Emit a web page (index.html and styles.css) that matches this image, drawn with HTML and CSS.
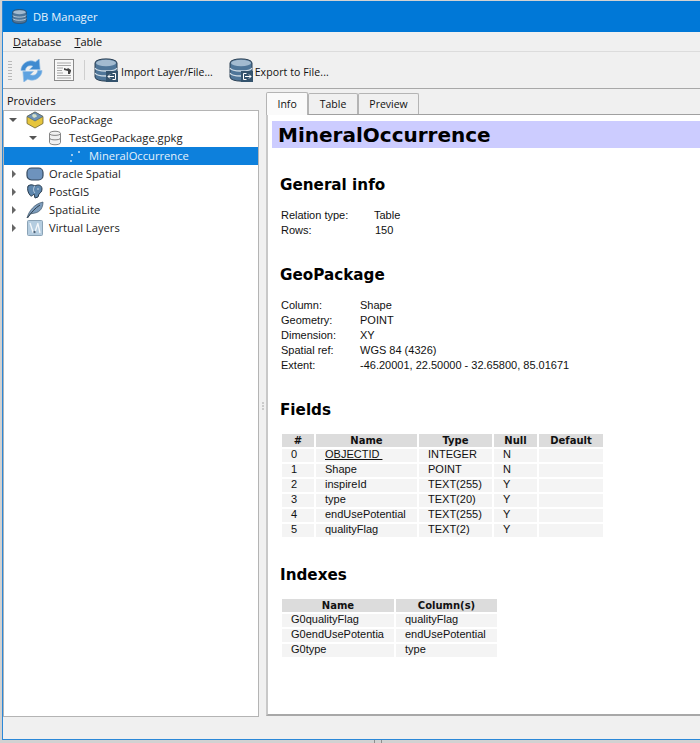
FILE: index.html
```html
<!DOCTYPE html>
<html lang="en">
<head>
    <meta charset="UTF-8">
    <title>DB Manager</title>
    <link rel="stylesheet" href="styles.css">
</head>
<body>
    <svg class="defs" width="0" height="0">
        <defs>
            <symbol id="db" viewBox="0 0 24 24">
                <path d="M1 5c0-5.500 22-5.500 22 0v14c0 5.500-22 5.500-22 0z" fill="#4f7699" stroke="#2a3f53"/>
                <ellipse cx="12" cy="5" rx="10" ry="3.200" fill="#a3bbd0"/>
                <path d="M1 10c2 4 20 4 22 0M1 15c2 4 20 4 22 0" fill="none" stroke="#cfdbe5" stroke-width="1.300"/>
            </symbol>
        </defs>
    </svg>

    <div class="window">
        <div class="titlebar">
            <svg class="title-icon" width="15" height="15"><use href="#db"/></svg>
            <span>DB Manager</span>
        </div>

        <div class="menubar">
            <span><u>D</u>atabase</span>
            <span><u>T</u>able</span>
        </div>

        <div class="toolbar">
            <div class="handle"></div>
            <svg class="tool-refresh" width="23" height="23" viewBox="0 0 24 24">
                <path d="M1 12C1 5 9-.5 16 3l4-3 1 11H10l3.500-3.500C9 6 6 8 5.500 12z" fill="#3f8ad0" stroke="#8fbce4" stroke-width=".7"/>
                <path d="M23 12c0 7-8 12.500-15 9l-4 3-1-11h11l-3.500 3.500c4.500 1.500 7.500-.5 8-4.500z" fill="#5ea2e0" stroke="#8fbce4" stroke-width=".7"/>
            </svg>
            <svg class="tool-sql" width="20" height="22" viewBox="0 0 20 22">
                <rect x=".5" y=".5" width="19" height="21" fill="#f8f8f8" stroke="#8a8a8a"/>
                <path d="M3 4h14M3 6.500h14M3 9h6M3 11.500h5M3 14h6M3 16.500h14M3 19h14" stroke="#a8a8a8"/>
                <path d="M10 9l3 1 1-1 3 2v1l-1 3h-2v-3l-4-1z" fill="#444"/>
            </svg>
            <div class="tool-sep"></div>
            <div class="tool-btn">
                <svg width="24" height="24" viewBox="0 0 24 24">
                    <use href="#db"/>
                    <rect x="12" y="13" width="12" height="11" fill="#34536d"/>
                    <path d="M18.500 15.500h3v6h-3M20 18.500h-6M16 16.500l-2 2 2 2" fill="none" stroke="#fff"/>
                </svg>
                <span>Import Layer/File...</span>
            </div>
            <div class="tool-btn tool-export">
                <svg width="24" height="24" viewBox="0 0 24 24">
                    <use href="#db"/>
                    <rect x="12" y="13" width="12" height="11" fill="#34536d"/>
                    <path d="M17.500 15.500h-3v6h3M16 18.500h6M20 16.500l2 2-2 2" fill="none" stroke="#fff"/>
                </svg>
                <span>Export to File...</span>
            </div>
        </div>

        <div class="main">
            <div class="providers">
                <div class="providers-title">Providers</div>
                <div class="tree">
                    <div class="row">
                        <i class="arrow open"></i>
                        <svg class="row-icon" width="18" height="18" viewBox="0 0 18 18">
                            <path d="M9 1l8 4.500v7L9 17l-8-4.500v-7z" fill="#e6c53c" stroke="#6d6330" stroke-width=".8"/>
                            <path d="M9 1l8 4.500L9 10 1 5.500z" fill="#6f93b5" stroke="#4c5c6c" stroke-width=".6"/>
                            <path d="M7 3l3 .500 1 2-3 1.500-2-2z" fill="#d6e1c8"/>
                        </svg>
                        <span>GeoPackage</span>
                    </div>
                    <div class="row level-1">
                        <i class="arrow open"></i>
                        <svg class="row-icon" width="18" height="18" viewBox="0 0 18 18">
                            <path d="M3.500 4.500c0-3 11-3 11 0v9c0 3-11 3-11 0z" fill="#f1f1f1" stroke="#858585"/>
                            <path d="M3.500 4.500c0 2.500 11 2.500 11 0M3.500 9c0 2.500 11 2.500 11 0" fill="none" stroke="#858585"/>
                        </svg>
                        <span>TestGeoPackage.gpkg</span>
                    </div>
                    <div class="row level-2 selected">
                        <i class="arrow"></i>
                        <svg class="row-icon" width="18" height="18" viewBox="0 0 18 18">
                            <circle cx="5" cy="14" r="1" fill="#cfe2f5"/>
                            <circle cx="6" cy="8" r="1" fill="#cfe2f5"/>
                            <circle cx="13" cy="5" r="1" fill="#cfe2f5"/>
                        </svg>
                        <span>MineralOccurrence</span>
                    </div>
                    <div class="row">
                        <i class="arrow closed"></i>
                        <svg class="row-icon" width="18" height="18" viewBox="0 0 18 18">
                            <rect x="1" y="3" width="16" height="12" rx="4.500" fill="#6e93bd" stroke="#34495f" stroke-width="1.200"/>
                        </svg>
                        <span>Oracle Spatial</span>
                    </div>
                    <div class="row">
                        <i class="arrow closed"></i>
                        <svg class="row-icon" width="18" height="18" viewBox="0 0 18 18">
                            <path d="M2 3c3-2 5-1 7 0 3-2 7-1 7 3 0 3-2 4-3 5l-1 3-3 1-1-4c-2 2-3 3-4 1-2-2-3-6-2-9z" fill="#5d86ad" stroke="#26394c"/>
                            <path d="M9 3c-2 2-2 5 0 7M12 5v2" fill="none" stroke="#d7e2ec" stroke-width=".8"/>
                        </svg>
                        <span>PostGIS</span>
                    </div>
                    <div class="row">
                        <i class="arrow closed"></i>
                        <svg class="row-icon" width="18" height="18" viewBox="0 0 18 18">
                            <path d="M1 17C3 10 8 3 17 1c0 6-3 10-8 11l-5 1z" fill="#7d9cbb" stroke="#3e5468" stroke-width=".7"/>
                            <path d="M1.500 17C5 12 9 7 14 4" fill="none" stroke="#2d3e4e"/>
                        </svg>
                        <span>SpatiaLite</span>
                    </div>
                    <div class="row">
                        <i class="arrow closed"></i>
                        <svg class="row-icon" width="18" height="18" viewBox="0 0 18 18">
                            <rect x="1.500" y="1.500" width="15" height="15" rx="1" fill="#b5cde0" stroke="#8ba3b6"/>
                            <path d="M4 4l3 9h2l3-9M8 13l1 1M12 5l2 9" fill="none" stroke="#f4f7fa" stroke-width="1.300"/>
                            <circle cx="8.500" cy="13" r="1.200" fill="#4c6378"/>
                        </svg>
                        <span>Virtual Layers</span>
                    </div>
                </div>
            </div>

            <div class="splitter"></div>

            <div class="tabs">
                <div class="tab-bar">
                    <div class="tab active">Info</div>
                    <div class="tab">Table</div>
                    <div class="tab">Preview</div>
                </div>
                <div class="pane">
                    <h1>MineralOccurrence</h1>

                    <section class="first">
                        <h2>General info</h2>
                        <table class="info info-general">
                            <tr><td>Relation type:</td><td>Table</td></tr>
                            <tr><td>Rows:</td><td class="num">150</td></tr>
                        </table>
                    </section>

                    <section>
                        <h2>GeoPackage</h2>
                        <table class="info info-geo">
                            <tr><td>Column:</td><td>Shape</td></tr>
                            <tr><td>Geometry:</td><td>POINT</td></tr>
                            <tr><td>Dimension:</td><td>XY</td></tr>
                            <tr><td>Spatial ref:</td><td>WGS 84 (4326)</td></tr>
                            <tr><td>Extent:</td><td>-46.20001, 22.50000 - 32.65800, 85.01671</td></tr>
                        </table>
                    </section>

                    <section>
                        <h2>Fields</h2>
                        <table class="grid grid-fields">
                            <tr><th>#</th><th>Name</th><th>Type</th><th>Null</th><th>Default</th></tr>
                            <tr><td>0</td><td><u>OBJECTID&nbsp;</u></td><td>INTEGER</td><td>N</td><td></td></tr>
                            <tr><td>1</td><td>Shape</td><td>POINT</td><td>N</td><td></td></tr>
                            <tr><td>2</td><td>inspireId</td><td>TEXT(255)</td><td>Y</td><td></td></tr>
                            <tr><td>3</td><td>type</td><td>TEXT(20)</td><td>Y</td><td></td></tr>
                            <tr><td>4</td><td>endUsePotential</td><td>TEXT(255)</td><td>Y</td><td></td></tr>
                            <tr><td>5</td><td>qualityFlag</td><td>TEXT(2)</td><td>Y</td><td></td></tr>
                        </table>
                    </section>

                    <section>
                        <h2>Indexes</h2>
                        <table class="grid grid-indexes">
                            <tr><th>Name</th><th>Column(s)</th></tr>
                            <tr><td>G0qualityFlag</td><td>qualityFlag</td></tr>
                            <tr><td>G0endUsePotentia</td><td>endUsePotential</td></tr>
                            <tr><td>G0type</td><td>type</td></tr>
                        </table>
                    </section>
                </div>
            </div>
        </div>

        <div class="statusbar"></div>
    </div>
</body>
</html>
```

FILE: styles.css
```css
html, body {
    height: 743px;
    margin: 0;
    overflow: hidden;
}

body {
    background-color: #d2d2d2;
    /* bits of the window behind, showing under this one */
    background-image: linear-gradient(#8e8e8e, #8e8e8e), linear-gradient(#8e8e8e, #8e8e8e);
    background-size: 1px 3px;
    background-position: 374px 740px, 381px 740px;
    background-repeat: no-repeat;
    font-family: "Liberation Sans", Arial, sans-serif;
    font-size: 11px;
    color: #111;
}

.defs {
    display: none;
}

.window {
    box-sizing: border-box;
    display: flex;
    flex-direction: column;
    width: 730px;
    height: 739px;
    margin: 1px 0 0 2px;
    background-color: #f0f0f0;
    border-left: 1px solid #2b88d8;
    border-bottom: 1px solid #2b88d8;
}

.titlebar {
    display: flex;
    align-items: center;
    flex: none;
    height: 31px;
    padding-left: 9px;
    background-color: #0078d7;
    color: #e9f3fb;
    font-family: "Open Sans", sans-serif;
    font-size: 11.200px;
}

.title-icon {
    margin-right: 6px;
}

.menubar {
    display: flex;
    flex: none;
    gap: 13px;
    height: 19px;
    padding-left: 10px;
    line-height: 20px;
    font-family: "Open Sans", sans-serif;
    font-size: 11px;
    border-bottom: 1px solid #dcdcdc;
}

.toolbar {
    display: flex;
    align-items: center;
    flex: none;
    height: 36px;
    font-family: "Open Sans", sans-serif;
    font-size: 10.500px;
    border-bottom: 1px solid #a8a8a8;
}

.handle {
    width: 4px;
    height: 20px;
    margin: 0 8px 0 5px;
    background-image: radial-gradient(#b5b5b5 35%, transparent 40%);
    background-size: 2px 3px;
}

.tool-sql {
    margin-left: 11px;
}

.tool-sep {
    width: 1px;
    height: 20px;
    margin: 0 9px 0 10px;
    background-color: #cfcfcf;
}

.tool-btn {
    display: flex;
    align-items: center;
    gap: 3px;
}

.tool-btn span {
    margin-top: 4px;
}

.tool-export {
    gap: 2px;
    margin-left: 16px;
    letter-spacing: .1px;
}

.main {
    display: flex;
    flex: 1;
    min-height: 0;
}

.providers {
    display: flex;
    flex-direction: column;
    flex: none;
    width: 256px;
}

.providers-title {
    flex: none;
    height: 21px;
    padding-left: 4px;
    line-height: 24px;
    font-family: "Open Sans", sans-serif;
}

.tree {
    flex: 1;
    background-color: white;
    border: 1px solid #b4b4b4;
    font-family: "Open Sans", sans-serif;
    font-size: 11.200px;
    color: #222;
}

.row {
    display: flex;
    align-items: center;
    height: 18px;
    padding-left: 1px;
}

.row span {
    margin-bottom: 2px;
}

.level-1 {
    padding-left: 21px;
}

.level-2 {
    padding-left: 41px;
}

.selected {
    background-color: #0d80dc;
    color: #e6f1fb;
}

.arrow {
    position: relative;
    flex: none;
    width: 16px;
    height: 18px;
}

.arrow.open::after,
.arrow.closed::after {
    content: "";
    position: absolute;
    border-style: solid;
    border-color: transparent;
}

.arrow.open::after {
    left: 4px;
    top: 7px;
    border-width: 4px 4px 0;
    border-top-color: #555;
}

.arrow.closed::after {
    left: 7px;
    top: 5px;
    border-width: 4px 0 4px 4px;
    border-left-color: #666;
}

.row-icon {
    flex: none;
    margin: 0 5px;
}

.splitter {
    flex: none;
    width: 7px;
    background-image: radial-gradient(#a5a5a5 40%, transparent 45%);
    background-size: 2px 3px;
    background-position: center;
    background-repeat: repeat-y;
    background-clip: content-box;
    padding: 313px 2px 307px;
    box-sizing: border-box;
}

.tabs {
    display: flex;
    flex-direction: column;
    flex: 1;
    min-width: 0;
}

.tab-bar {
    display: flex;
    flex: none;
    align-items: flex-end;
    height: 25px;
    font-size: 10.500px;
}

.tab {
    box-sizing: border-box;
    height: 21px;
    padding: 0 10.500px;
    line-height: 21px;
    background-color: #f0f0f0;
    border: 1px solid #b4b4b4;
    border-bottom: none;
    border-radius: 2px 2px 0 0;
    font-family: "Open Sans", sans-serif;
}

.tab.active {
    height: 23px;
    margin-bottom: -1px;
    background-color: #fafafa;
    line-height: 22px;
    z-index: 1;
}

.pane {
    flex: 1;
    margin-bottom: 1px;
    padding: 6px 0 0 4px;
    background-color: white;
    border: 1px solid #a0a0a0;
    border-left: 2px solid #c8c8c8;
    border-bottom: 2px solid #a8a8a8;
}

h1 {
    margin: 0;
    padding-left: 6px;
    height: 27px;
    background-color: #ccccff;
    color: black;
    font-family: "DejaVu Sans", sans-serif;
    font-size: 20px;
    line-height: 28px;
}

h2 {
    margin: 0 0 14px;
    padding-left: 8px;
    height: 20px;
    color: black;
    font-family: "DejaVu Sans", sans-serif;
    font-size: 15.200px;
    line-height: 20px;
}

section {
    margin-bottom: 26px;
}

section.first {
    margin-top: 27px;
}

table {
    border-collapse: separate;
}

.info {
    border-spacing: 0;
    margin-left: 9px;
}

.info td {
    height: 15px;
    padding: 0;
    line-height: 13px;
    vertical-align: top;
}

.info td.num {
    padding-left: 1px;
}

.info-general td:first-child {
    width: 93px;
}

.info-geo td:first-child {
    width: 79px;
}

.grid {
    border-spacing: 2px;
    margin: -2px 0 0 8px;
    table-layout: fixed;
}

.grid th,
.grid td {
    height: 13px;
    padding: 0 0 0 9px;
    line-height: 11px;
    vertical-align: top;
    white-space: nowrap;
    overflow: hidden;
    box-sizing: border-box;
}

.grid th {
    padding: 0;
    line-height: 13px;
    background-color: #dcdcdc;
    font-family: "DejaVu Sans", sans-serif;
    font-size: 10px;
    text-align: center;
}

.grid td {
    background-color: #f4f4f4;
}

.grid-fields {
    width: 325px;
}

.grid-fields th:nth-child(1) { width: 32px; }
.grid-fields th:nth-child(2) { width: 101px; }
.grid-fields th:nth-child(3) { width: 73px; }
.grid-fields th:nth-child(4) { width: 43px; }
.grid-fields th:nth-child(5) { width: 64px; }

.grid-indexes {
    width: 219px;
}

.grid-indexes th:nth-child(1) { width: 112px; }
.grid-indexes th:nth-child(2) { width: 101px; }

.statusbar {
    flex: none;
    height: 22px;
}
```
